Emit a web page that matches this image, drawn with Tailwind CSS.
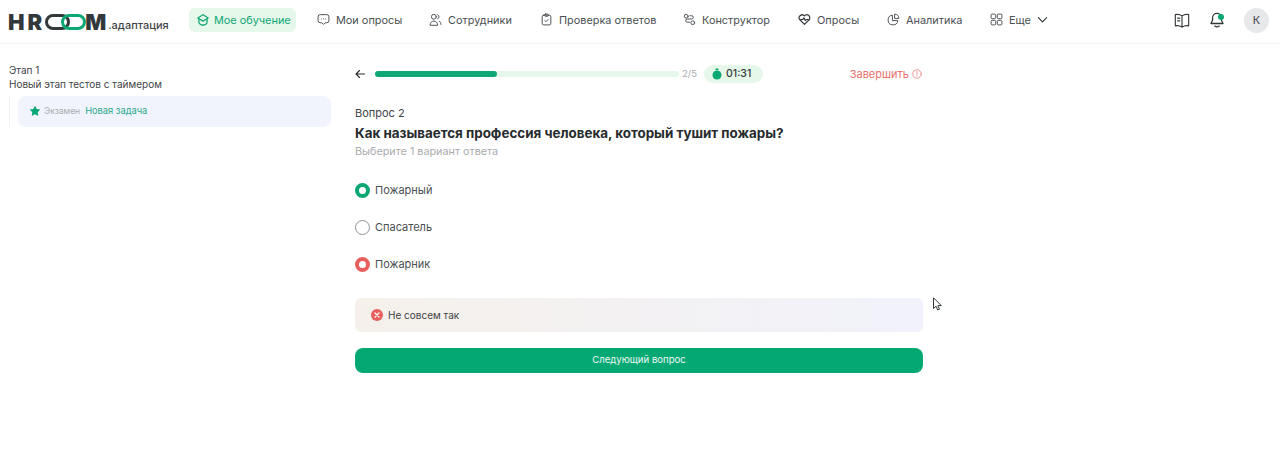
<!DOCTYPE html>
<html lang="ru">
<head>
  <meta charset="UTF-8" />
  <title>HROOM адаптация</title>
  <script src="https://cdn.jsdelivr.net/npm/@tailwindcss/browser@4"></script>
</head>
<body class="relative h-[460px] w-[1280px] overflow-hidden bg-white font-['Inter',sans-serif] text-[#3f4447]">

  <!-- Header -->
  <header class="flex h-[44px] items-center border-b border-[#f3f4f4] pb-[3px] pl-[8px] pr-[11px] shadow-[0_1px_3px_rgba(0,0,0,0.02)]">
    <div class="flex w-[174px] shrink-0 items-end pt-[3px]">
      <span class="text-[22px] leading-[20px] font-black tracking-[3px] text-[#33383a]">HR</span>
      <svg class="mb-[2px]" width="41" height="16" viewBox="0 0 41 16" fill="none">
        <rect x="1.500" y="1.500" width="22" height="13" rx="6.500" stroke="#33383a" stroke-width="3"/>
        <rect x="17.500" y="1.500" width="22" height="13" rx="6.500" stroke="#0ba873" stroke-width="3"/>
      </svg>
      <span class="ml-[-1px] text-[22px] leading-[20px] font-black text-[#33383a]">M</span>
      <span class="ml-[2px] text-[11px] leading-[14px] font-medium text-[#3f4447]">.адаптация</span>
    </div>

    <nav class="ml-[7px] flex items-center gap-[13px] text-[10.900px] text-[#4a4f52]">
      <a class="mr-[1px] flex h-[24px] w-[107px] items-center gap-[4px] rounded-[6px] bg-[#e6f8e9] pl-[7px] whitespace-nowrap text-[#10a777]">
        <svg class="shrink-0" width="14" height="14" viewBox="0 0 24 24" fill="none" stroke="#10a777" stroke-width="2.200" stroke-linejoin="round" stroke-linecap="round"><path d="M12 3 3 8.500 12 14l9-5.500L12 3Z"/><path d="M5 11v5c0 2.500 3.500 5 7 5s7-2.500 7-5v-5"/></svg>
        Мое обучение
      </a>
      <a class="flex w-[99px] items-center gap-[6px] pl-[7px] whitespace-nowrap">
        <svg class="shrink-0" width="13" height="13" viewBox="0 0 24 24" fill="none" stroke="#4a4f52" stroke-width="1.800" stroke-linejoin="round"><path d="M6 3h12a4 4 0 0 1 4 4v7a4 4 0 0 1-4 4h-3l-3 3-3-3H6a4 4 0 0 1-4-4V7a4 4 0 0 1 4-4Z"/><path d="M8 11h.01M12 11h.01M16 11h.01" stroke-linecap="round"/></svg>
        Мои опросы
      </a>
      <a class="flex w-[98px] items-center gap-[6px] pl-[7px] whitespace-nowrap">
        <svg class="shrink-0" width="13" height="13" viewBox="0 0 24 24" fill="none" stroke="#4a4f52" stroke-width="1.800" stroke-linecap="round"><circle cx="9" cy="7" r="4.500"/><path d="M2 22c0-4 3-7 7-7s7 3 7 7Z"/><path d="M16 3a4.500 4.500 0 0 1 0 8M19 15c2 1 3 3 3 6"/></svg>
        Сотрудники
      </a>
      <a class="flex w-[130px] items-center gap-[6px] pl-[7px] whitespace-nowrap">
        <svg class="shrink-0" width="13" height="13" viewBox="0 0 24 24" fill="none" stroke="#4a4f52" stroke-width="1.800" stroke-linecap="round" stroke-linejoin="round"><rect x="4" y="4" width="16" height="18" rx="3"/><rect x="8.500" y="2" width="7" height="4" rx="1.500"/><path d="m9 14 2 2 4-4"/></svg>
        Проверка ответов
      </a>
      <a class="flex w-[102px] items-center gap-[6px] pl-[7px] whitespace-nowrap">
        <svg class="shrink-0" width="13" height="13" viewBox="0 0 24 24" fill="none" stroke="#4a4f52" stroke-width="1.800" stroke-linecap="round"><circle cx="6" cy="6" r="3.500"/><circle cx="18" cy="18" r="3.500"/><path d="M13 5h3a3 3 0 0 1 0 6H8a3 3 0 0 0 0 6h4"/></svg>
        Конструктор
      </a>
      <a class="flex w-[76px] items-center gap-[6px] pl-[7px] whitespace-nowrap">
        <svg class="shrink-0" width="13" height="13" viewBox="0 0 24 24" fill="none" stroke="#33383a" stroke-width="2.200" stroke-linejoin="round" stroke-linecap="round"><path d="M12 21 3.500 12.500a5.500 5.500 0 0 1 8.500-7 5.500 5.500 0 0 1 8.500 7L12 21Z"/><path d="M5 12h4l2-3 2.500 5 1.500-2h4"/></svg>
        Опросы
      </a>
      <a class="flex w-[90px] items-center gap-[6px] pl-[7px] whitespace-nowrap">
        <svg class="shrink-0" width="13" height="13" viewBox="0 0 24 24" fill="none" stroke="#4a4f52" stroke-width="1.800" stroke-linejoin="round"><path d="M10 4a9 9 0 1 0 10 10H10V4Z"/><path d="M14 2a8 8 0 0 1 8 8h-8V2Z"/></svg>
        Аналитика
      </a>
      <a class="flex items-center gap-[6px] pl-[7px] whitespace-nowrap">
        <svg class="shrink-0" width="13" height="13" viewBox="0 0 24 24" fill="none" stroke="#4a4f52" stroke-width="1.800"><rect x="2" y="2" width="8.500" height="8.500" rx="2"/><rect x="13.500" y="2" width="8.500" height="8.500" rx="2"/><rect x="2" y="13.500" width="8.500" height="8.500" rx="2"/><rect x="13.500" y="13.500" width="8.500" height="8.500" rx="2"/></svg>
        Еще
        <svg class="shrink-0" width="11" height="11" viewBox="0 0 24 24" fill="none" stroke="#33383a" stroke-width="2.500" stroke-linecap="round" stroke-linejoin="round"><path d="m3 8 9 9 9-9"/></svg>
      </a>
    </nav>

    <div class="ml-auto flex items-center gap-[20px]">
      <svg width="16" height="15" viewBox="0 0 24 22" fill="none" stroke="#33383a" stroke-width="1.700" stroke-linejoin="round" stroke-linecap="round"><path d="M12 4C9 1.800 5 1.500 2 2v17c3-.5 7-.2 10 2 3-2.200 7-2.500 10-2V2c-3-.5-7-.2-10 2Zm0 0v17"/><path d="M5.500 7.500h3M5.500 11.500h3"/></svg>
      <div class="relative h-[16px] w-[14px]">
        <svg width="14" height="16" viewBox="0 0 22 25" fill="none" stroke="#33383a" stroke-width="2" stroke-linejoin="round" stroke-linecap="round"><path d="M11 2a7 7 0 0 0-7 7v4l-2.500 5h19L18 13V9a7 7 0 0 0-7-7Z"/><path d="M7.500 22c2 1.500 5 1.500 7 0"/></svg>
        <span class="absolute top-[2px] right-0 h-[6px] w-[6px] rounded-full bg-[#0ba873]"></span>
      </div>
      <div class="flex h-[25px] w-[25px] items-center justify-center rounded-full bg-[#e7e8ea] text-[11px] text-[#3f4447]">К</div>
    </div>
  </header>

  <main class="flex">
    <!-- Sidebar -->
    <aside class="w-[331px] shrink-0 pt-[19px] pl-[9px] text-[10px] leading-[14px] text-[#3f4447]">
      <p>Этап 1</p>
      <p>Новый этап тестов с таймером</p>
      <div class="mt-[5px] border-l border-[#f1f2f4] pl-[8px]">
        <div class="flex h-[31px] items-center rounded-[8px] bg-[#f1f4fd] pb-[2px] pl-[11px]">
          <svg width="12" height="12" viewBox="0 0 24 24" fill="#0ba873"><path d="M12 1.500 15.500 8l7 1.200-5 5.300 1 7.300L12 18.500l-6.500 3.300 1-7.300-5-5.300L8.500 8 12 1.500Z"/></svg>
          <span class="ml-[3px] text-[8.500px] text-[#a9acae]">Экзамен</span>
          <span class="ml-[5px] text-[9.300px] text-[#2ba98a]">Новая задача</span>
        </div>
      </div>
    </aside>

    <!-- Question -->
    <section class="ml-[24px] w-[568px] shrink-0">
      <div class="mt-[21px] flex h-[18px] items-center">
        <svg width="10" height="10" viewBox="0 0 20 20" fill="none" stroke="#262b2d" stroke-width="2.200" stroke-linecap="round" stroke-linejoin="round"><path d="M19 10H2M9 3l-7 7 7 7"/></svg>
        <div class="ml-[10px] h-[6px] w-[304px] rounded-full bg-[#e6f8e9]">
          <div class="h-full rounded-full bg-[#10a777]" style="width: 40%"></div>
        </div>
        <span class="ml-[3px] w-[15px] text-[9.500px] text-[#a9acae]">2/5</span>
        <div class="ml-[7px] flex h-[18px] w-[59px] items-center gap-[4px] rounded-full bg-[#e6f8e9] pl-[8px]">
          <svg width="10" height="12" viewBox="0 0 20 24" fill="#0ba873"><circle cx="10" cy="14" r="9"/><rect x="7" y="1" width="6" height="3" rx="1"/></svg>
          <span class="text-[10.500px] font-medium text-[#33383a]">01:31</span>
        </div>
        <div class="mr-px ml-auto flex items-center gap-[3px] text-[11px] text-[#e8716f]">
          Завершить
          <svg width="10" height="10" viewBox="0 0 20 20" fill="none" stroke="#e8716f" stroke-width="1.500" stroke-linecap="round"><circle cx="10" cy="10" r="8.500"/><path d="M10 5.500v5.500M10 14v.2"/></svg>
        </div>
      </div>

      <p class="mt-[22px] text-[11px] leading-[16px] text-[#3f4447]">Вопрос 2</p>
      <h1 class="mt-[2px] text-[13.400px] leading-[20px] font-bold text-[#262b2d]">Как называется профессия человека, который тушит пожары?</h1>
      <p class="mt-[1px] text-[10.800px] leading-[16px] text-[#a9acae]">Выберите 1 вариант ответа</p>

      <ul class="mt-[23px] flex flex-col gap-[22px] text-[11px] text-[#4a4f52]">
        <li class="flex h-[15px] items-center gap-[5px]"><span class="h-[15px] w-[15px] rounded-full border-[4px] border-[#0ba873]"></span>Пожарный</li>
        <li class="flex h-[15px] items-center gap-[5px]"><span class="h-[15px] w-[15px] rounded-full border-[1.500px] border-[#8e9295]"></span>Спасатель</li>
        <li class="flex h-[15px] items-center gap-[5px]"><span class="h-[15px] w-[15px] rounded-full border-[4px] border-[#e8605e]"></span>Пожарник</li>
      </ul>

      <div class="mt-[26px] flex h-[34px] items-center gap-[5px] rounded-[6px] bg-gradient-to-r from-[#f5f0ea] to-[#f1f2fb] pl-[16px] text-[10px] text-[#3f4447]">
        <svg width="12" height="12" viewBox="0 0 24 24"><circle cx="12" cy="12" r="12" fill="#e8605e"/><path d="m8 8 8 8M16 8l-8 8" stroke="#fff" stroke-width="2.500" stroke-linecap="round"/></svg>
        Не совсем так
      </div>

      <button class="mt-[16px] h-[25px] w-full rounded-[8px] bg-[#04a873] text-[9.600px] text-[#eef9f5]">Следующий вопрос</button>
    </section>
  </main>

  <!-- Mouse pointer caught in the screenshot -->
  <svg class="absolute top-[297px] left-[933px]" width="9" height="15" viewBox="0 0 9 15" fill="#fff" stroke="#33383a" stroke-width="1"><path d="M.5.800v10.700l2.600-2.300 1.600 3.800 1.800-.8-1.600-3.600h3.400L.5.800Z"/></svg>
</body>
</html>
